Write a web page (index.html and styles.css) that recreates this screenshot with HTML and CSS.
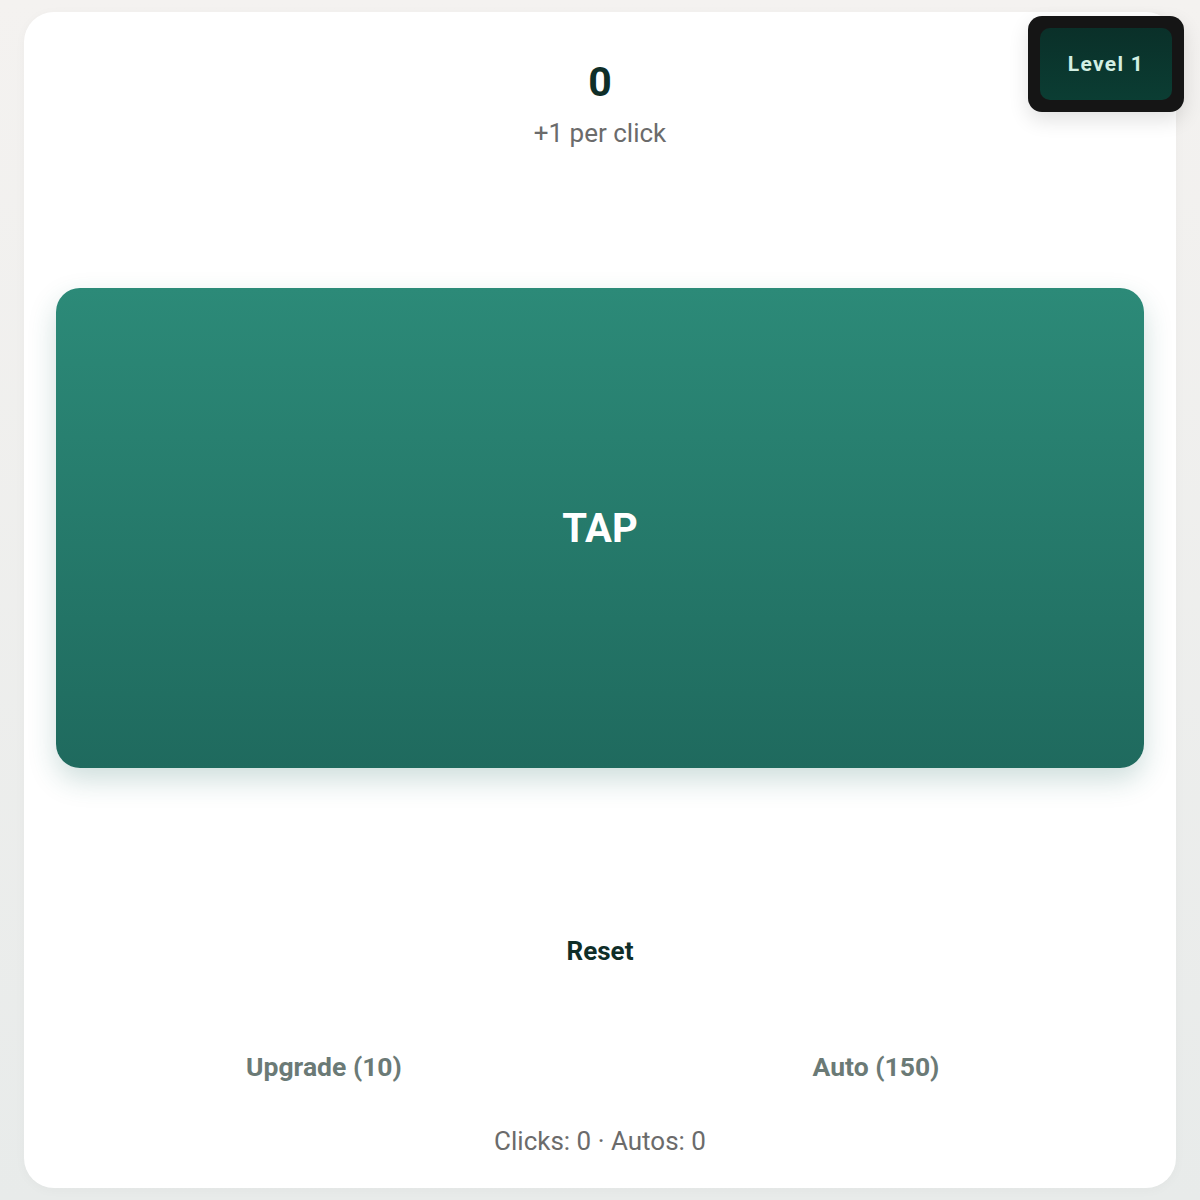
FILE: index.html
```html
<!DOCTYPE html>
<html>
<head>
<meta charset="utf-8">
<link rel="stylesheet" href="styles.css">
</head>
<body>
<div class="card">
  <div class="header">
    <div class="score">0</div>
    <div class="rate">+1 per click</div>
  </div>
  <button class="tap">TAP</button>
  <button class="reset">Reset</button>
  <div class="shop">
    <button class="buy">Upgrade (10)</button>
    <button class="buy">Auto (150)</button>
  </div>
  <div class="stats">Clicks: 0 · Autos: 0</div>
</div>
<div class="level"><div class="level-inner">Level 1</div></div>
</body>
</html>
```
FILE: styles.css
```css
* { box-sizing: border-box; }
html, body { height: 100%; }
body {
  margin: 0;
  padding: 12px 24px;
  font-family: Roboto, "Noto Sans", sans-serif;
  background: linear-gradient(180deg, #f4f2f0 0%, #e8ebea 100%);
}
.card {
  height: 1176px;
  background: #ffffff;
  border-radius: 30px;
  padding: 32px;
  display: flex;
  flex-direction: column;
  box-shadow: 0 2px 12px rgba(0,0,0,0.03);
}
.card > * { flex-shrink: 0; }
.header {
  margin-top: 14px;
  text-align: center;
}
.score {
  font-size: 41px;
  font-weight: 700;
  line-height: 48px;
  color: #0f2e28;
}
.rate {
  margin-top: 11px;
  font-size: 26px;
  line-height: 32px;
  color: #6b6b6b;
}
button {
  font-family: inherit;
  border: none;
  background: none;
  cursor: pointer;
  padding: 0;
}
.tap {
  margin-top: 139px;
  height: 480px;
  width: 100%;
  border-radius: 24px;
  background: linear-gradient(180deg, #2c8a78 0%, #1f6a5e 100%);
  color: #ffffff;
  font-size: 40px;
  font-weight: 700;
  box-shadow: 0 12px 28px rgba(31,106,94,0.22);
}
.reset {
  margin-top: 167px;
  align-self: center;
  font-size: 26px;
  font-weight: 700;
  line-height: 32px;
  color: #0f2e28;
}
.shop {
  margin-top: 83px;
  display: grid;
  grid-template-columns: 1fr 1fr;
  gap: 16px;
}
.buy {
  font-size: 26.5px;
  font-weight: 700;
  line-height: 34px;
  color: #6b7a76;
}
.stats {
  margin-top: 41px;
  text-align: center;
  font-size: 26px;
  line-height: 32px;
  color: #6b6b6b;
}
.level {
  position: absolute;
  top: 16px;
  right: 16px;
  width: 156px;
  height: 96px;
  padding: 12px;
  background: #151515;
  border-radius: 14px;
  box-shadow: 0 8px 20px rgba(0,0,0,0.12);
}
.level-inner {
  height: 100%;
  border-radius: 10px;
  background: linear-gradient(180deg, #0a3029 0%, #0b3d33 100%);
  color: #d2efe3;
  font-size: 21px;
  font-weight: 700;
  letter-spacing: 1.3px;
  display: flex;
  align-items: center;
  justify-content: center;
}
```
